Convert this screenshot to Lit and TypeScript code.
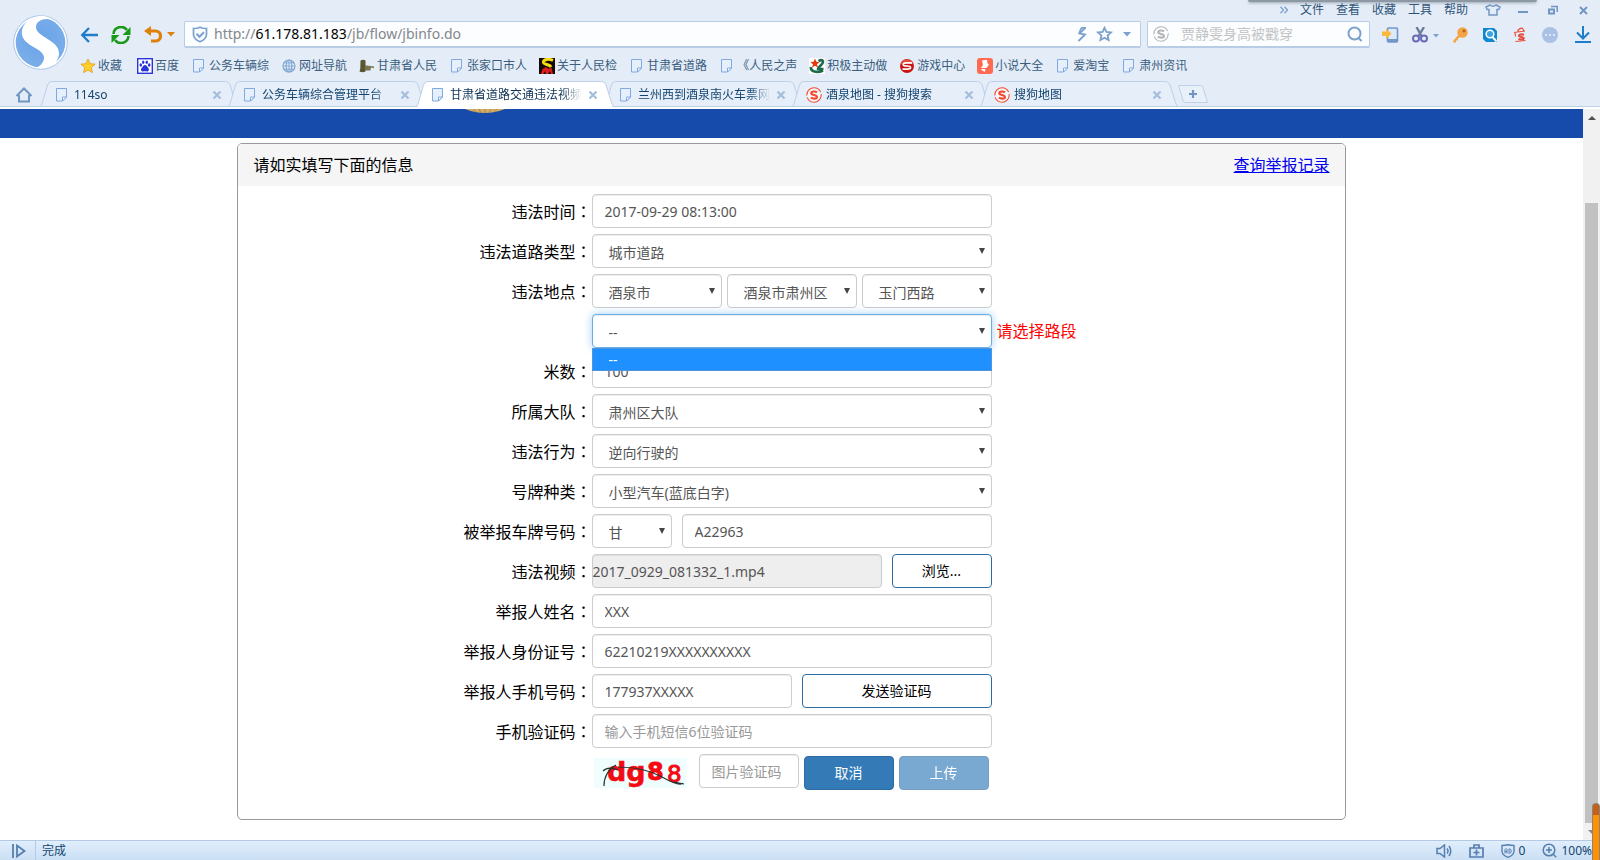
import { LitElement, html, svg, css, nothing, TemplateResult } from "lit";
import { customElement, state } from "lit/decorators.js";
import { classMap } from "lit/directives/class-map.js";

type Icon = TemplateResult;

const S_CURVE = "M11 5.3C9.6 4.2 5.3 4 5.3 6.3c0 2.2 5.6 1.2 5.6 3.6 0 2.2-4.2 2.1-6 .8";

const pageIcon: Icon = html`<svg width="16" height="16" viewBox="0 0 16 16" aria-hidden="true">
  <path d="M2.500 1.500h10v8.500l-4 4h-6z" fill="#e6f0fc" stroke="#7fa9e0" />
  <path d="M12.500 10h-4v4z" fill="#fff" stroke="#7fa9e0" />
</svg>`;
const sogouIcon = (color: string): Icon => html`<svg width="16" height="16" viewBox="0 0 16 16" aria-hidden="true">
  <circle cx="8" cy="8" r="7.200" fill="#fff" fill-opacity=".5" stroke=${color} stroke-width="1.100" stroke-dasharray="20 2" />
  <path d=${S_CURVE} fill="none" stroke=${color} stroke-width="2.200" />
</svg>`;
const starIcon: Icon = html`<svg width="16" height="16" viewBox="0 0 16 16" aria-hidden="true">
  <path d="M8 1l2.100 4.700 5 .5-3.800 3.400 1.100 5L8 12l-4.400 2.600 1.100-5L.9 6.200l5-.5z" fill="#ffcf2e" stroke="#e3a21a" stroke-width=".9" />
</svg>`;
const pawIcon: Icon = html`<svg width="16" height="16" viewBox="0 0 16 16" aria-hidden="true">
  <rect x=".7" y=".7" width="14.600" height="14.600" fill="#fff" stroke="#2a35d8" stroke-width="1.400" />
  <g fill="#2a35d8"><ellipse cx="3.800" cy="7" rx="1.300" ry="1.700" /><ellipse cx="6.200" cy="4.200" rx="1.200" ry="1.800" />
  <ellipse cx="9.800" cy="4.200" rx="1.200" ry="1.800" /><ellipse cx="12.200" cy="7" rx="1.300" ry="1.700" />
  <path d="M8 7c1.500 0 2 1.500 3 2.400 1.300 1.200 1.400 4-1 4-.8 0-1.200-.2-2-.2s-1.200.2-2 .2c-2.400 0-2.300-2.800-1-4C6 8.500 6.500 7 8 7z" /></g>
</svg>`;
const globeIcon: Icon = html`<svg width="16" height="16" viewBox="0 0 16 16" fill="none" stroke="#83a8d3" stroke-width="1.200" aria-hidden="true">
  <circle cx="8" cy="8" r="6" /><ellipse cx="8" cy="8" rx="2.800" ry="6" /><path d="M8 2v12M2 8h12M3 4.800h10M3 11.200h10" stroke-width="1" />
</svg>`;
const gavelIcon: Icon = html`<svg width="16" height="16" viewBox="0 0 16 16" aria-hidden="true">
  <path d="M1.500 2.500q3-1.500 5 0v11q-3 1.500-6 0l.8-3z" fill="#5a5532" /><path d="M6 7.200l9 1.300v1.700l-3-.6-.6 3H6z" fill="#7b7550" />
</svg>`;
const courtIcon: Icon = html`<svg width="16" height="16" viewBox="0 0 16 16" aria-hidden="true">
  <rect width="16" height="16" fill="#140a05" /><path d="M14 2.500C10 .3 4 1.500 4.500 4.500 5 7 10.500 6 12 9" fill="none" stroke="#f7dc12" stroke-width="3" />
  <path d="M2 16l1.500-5 3.500-2 2.500 2 3-1.500 1.500 6.500h-2l-1-3-2 3H7l-1-3-1.500 3z" fill="#dc1d1d" />
</svg>`;
const starRingIcon: Icon = html`<svg width="16" height="16" viewBox="0 0 16 16" aria-hidden="true">
  <rect width="16" height="16" fill="#fff" /><path d="M9.500 3q4-2 4.500.5c.5 3-5 5-5 7.500h5.500M2 9c-1 4.500 6 6.500 12 3.500" fill="none" stroke="#1b6b4b" stroke-width="2.600" />
  <path d="M6 .5l1.300 3.200L10.500 4 8 6.300 9 9.500 6 7.700 3 9.500 4 6.300 1.300 4l3.400-.3z" fill="#e5380d" />
</svg>`;
const gameIcon: Icon = html`<svg width="16" height="16" viewBox="0 0 16 16" aria-hidden="true">
  <circle cx="8" cy="8" r="7" fill="#c8150f" /><path d="M1.800 6a6.500 6.500 0 0 1 12.400 0z" fill="#ef6a58" fill-opacity=".7" />
  <path d="M13 4.800H7.200Q4 5 4.200 6.700 4.500 8 8 8q3.800 0 3.600 1.700-.3 1.500-3.200 1.500H3.500" fill="none" stroke="#fff" stroke-width="1.700" />
</svg>`;
const novelIcon: Icon = html`<svg width="16" height="16" viewBox="0 0 16 16" aria-hidden="true">
  <rect width="16" height="16" rx="3" fill="#ff6a50" /><path d="M5 2.500l5-.7.5 3.500L12 6.500 9.500 10H4l2-3z" fill="#fff" /><path d="M3.800 11h4.500L8 14l-2-1z" fill="#fff" />
</svg>`;

const caret = svg`<path d="M0 0h8L4 4.500z" fill="#7ba1cc" />`;

interface Bookmark { label: string; icon: Icon }
interface Tab { title: string; icon: Icon; active?: boolean }

const BOOKMARKS: Bookmark[] = [
  { label: "百度", icon: pawIcon },
  { label: "公务车辆综", icon: pageIcon },
  { label: "网址导航", icon: globeIcon },
  { label: "甘肃省人民", icon: gavelIcon },
  { label: "张家口市人", icon: pageIcon },
  { label: "关于人民检", icon: courtIcon },
  { label: "甘肃省道路", icon: pageIcon },
  { label: "《人民之声", icon: pageIcon },
  { label: "积极主动做", icon: starRingIcon },
  { label: "游戏中心", icon: gameIcon },
  { label: "小说大全", icon: novelIcon },
  { label: "爱淘宝", icon: pageIcon },
  { label: "肃州资讯", icon: pageIcon },
];

const TABS: Tab[] = [
  { title: "114so", icon: pageIcon },
  { title: "公务车辆综合管理平台", icon: pageIcon },
  { title: "甘肃省道路交通违法视频举报", icon: pageIcon, active: true },
  { title: "兰州西到酒泉南火车票网上订", icon: pageIcon },
  { title: "酒泉地图 - 搜狗搜索", icon: sogouIcon("#f4492c") },
  { title: "搜狗地图", icon: sogouIcon("#f4492c") },
];

@customElement("app-root")
export class AppRoot extends LitElement {
  @state() private sectionOpen = true;

  static styles = css`
    :host {
      display: grid;
      grid-template-rows: auto 1fr auto;
      min-height: 100vh;
      position: relative;
      background: #fff;
      color: #000;
      font-family: "Noto Sans", "Noto Sans CJK SC", sans-serif;
      font-size: 12px;
      line-height: 16px;
    }
    *, *::before, *::after { box-sizing: border-box; }
    svg { display: block; flex: none; }
    button, input, select { font: inherit; color: inherit; margin: 0; }
    button { background: none; border: 0; padding: 0; cursor: pointer; }
    a { color: inherit; }

    /* browser frame */
    .frame { background: #e4edf7; display: grid; grid-template-columns: 80px 1fr; }
    .logo { grid-row: 1 / 4; padding: 15px 0 0 13px; }
    .menu { display: flex; align-items: center; justify-content: flex-end; height: 20px; padding-right: 2px; color: #2c5378; }
    .menu-items { display: flex; align-items: center; gap: 12px; margin-right: 10px; }
    .icon-button { display: flex; align-items: center; justify-content: center; width: 30px; height: 20px; }
    .edge-shadow { position: absolute; top: 0; right: 63px; width: 289px; height: 2px; background: #8d98a5; border-radius: 0 0 3px 3px; box-shadow: 0 1px 3px #8d98a5; }
    .address-row { display: flex; align-items: center; height: 29px; }
    .nav { display: flex; align-items: center; gap: 12px; width: 104px; flex: none; }
    .nav .undo { display: flex; align-items: center; gap: 5px; }
    .address, .search { display: flex; align-items: center; height: 27px; background: #fbfdfe; border: 1px solid #b9cce6; border-bottom-width: 2px; border-radius: 2px; }
    .address { flex: 1; padding: 0 8px 0 7px; gap: 6px; font-size: 14px; line-height: 20px; }
    .url { display: grid; flex: 1; color: #84878b; white-space: pre; }
    .url > * { grid-area: 1 / 1; }
    .url input { border: 0; padding: 0; background: none; color: transparent; caret-color: #000; outline: none; min-width: 0; }
    .url b { font-weight: 400; color: #000; }
    .address-tools { display: flex; align-items: center; gap: 9px; }
    .search { width: 223px; margin-left: 6px; padding: 0 6px 0 5px; gap: 12px; font-size: 14px; line-height: 20px; }
    .search input { flex: 1; min-width: 0; border: 0; padding: 0; background: none; outline: none; }
    .search input::placeholder { color: #c2c4c6; opacity: 1; }
    .tools { display: flex; align-items: center; padding-left: 5px; }
    .tools .wide { width: 40px; }
    .tools .download { width: 35px; }
    .bookmarks { display: flex; align-items: center; gap: 12px; height: 32px; padding-top: 1px; color: #3a5d80; }
    .bookmarks a { display: flex; align-items: center; gap: 2px; text-decoration: none; white-space: nowrap; }
    .bookmarks .favourites { padding-right: 3px; }

    .tabs { grid-column: 1 / 3; display: flex; height: 28px; background: linear-gradient(#e4edf7 25px, #bdd0e8 25px, #bdd0e8 26px, #fff 26px); }
    .home { width: 40px; padding-left: 8px; height: 26px; }
    .tab { position: relative; height: 28px; flex: 0 0 188px; display: grid; grid-template-columns: 188px; }
    .tab > * { grid-area: 1 / 1; }
    .tab.active { z-index: 1; }
    .tab-body { display: flex; align-items: center; height: 28px; padding: 0 6px 0 14px; gap: 4px; z-index: 1; }
    .tab-title { flex: 1; min-width: 0; overflow: hidden; text-align: left; white-space: nowrap; color: #14446f; -webkit-mask-image: linear-gradient(90deg, #000 112px, transparent 132px); mask-image: linear-gradient(90deg, #000 112px, transparent 132px); }
    .tab-title.dark { color: #0d3253; }
    .new-tab { margin-left: 9px; height: 26px; }

    /* page */
    .view { display: grid; grid-template-columns: 1fr 17px; }
    .banner { background: #174bab; height: 29px; padding-left: 29%; }
    .panel { width: 70%; margin: 5px auto 20px; border: 1px solid #999; border-radius: 5px; overflow: hidden; font-size: 16px; line-height: 24px; }
    .panel-head { display: flex; align-items: center; justify-content: space-between; background: #f5f5f5; height: 42px; padding: 0 15px; }
    .panel-head h1 { margin: 0; font-size: 16px; font-weight: 400; }
    .panel-head a { color: #00e; }
    form { display: grid; gap: 6px; padding: 8px 0 29px; }
    .row { display: grid; grid-template-columns: 1fr 400px 1fr; align-items: center; }
    .row > label { text-align: right; }
    .colon { font-family: "Noto Sans CJK TC", sans-serif; }
    .controls { display: flex; gap: 10px; position: relative; grid-column: 2; }
    .controls.tight { gap: 5px; }
    .error { color: #f00; padding-left: 5px; }
    .control { height: 34px; width: 100%; padding: 6px 12px; border: 1px solid #ccc; border-radius: 4px; background: #fff; color: #555; font-size: 14px; line-height: 20px; box-shadow: inset 0 1px 1px rgba(0, 0, 0, .075); outline: none; }
    .control::placeholder { color: #999; opacity: 1; }
    .pick { display: grid; flex: 1; min-width: 0; }
    .pick > * { grid-area: 1 / 1; }
    .pick svg { justify-self: end; margin: 13px 7px 0 0; pointer-events: none; z-index: 1; }
    .pick select { appearance: none; padding: 8px 18px 4px 16px; }
    .pick.focused select { border-color: #66afe9; box-shadow: inset 0 1px 1px rgba(0, 0, 0, .075), 0 0 8px rgba(102, 175, 233, .6); }
    .province { flex: 0 0 80px; }
    .file { background: #eee; padding-left: 0; }
    .phone { flex: 0 0 200px; }
    .options { position: absolute; top: 34px; left: 0; right: 0; z-index: 2; margin: 0; padding: 0; list-style: none; border: 1px solid #4f94dc; background: #1e90ff; color: #fff; font-size: 14px; line-height: 21px; }
    .options li { padding-left: 16px; }
    .action { height: 34px; border: 1px solid #2e6da4; border-radius: 4px; background: #fff; font-size: 14px; line-height: 20px; flex: 1; }
    .action.browse { flex: 0 0 100px; }
    .action.solid { flex: 0 0 90px; background: #337ab7; color: #fff; margin-top: 2px; }
    .action[disabled] { opacity: .65; }
    .captcha { margin: 4px 0 0 2px; overflow: visible; }
    .code { flex: 0 0 100px; width: 100px; }

    .scrollbar { background: #f1f1f1; display: grid; grid-template-rows: 17px 1fr 17px; justify-items: center; align-items: center; }
    .scrollbar .track { align-self: stretch; width: 13px; padding-top: 77px; display: grid; }
    .scrollbar .thumb { background: #c1c1c1; }
    .meter { position: absolute; right: 0; bottom: 0; z-index: 3; width: 8px; height: 57px; border: 1px solid #8d8478; border-bottom: 0; border-radius: 4px 4px 0 0; background: linear-gradient(#c4601a 11px, #ff9000 11px); }

    .status { display: flex; align-items: center; height: 20px; padding: 0 8px 0 11px; border-top: 1px solid #b3c9e4; background: linear-gradient(#e0eefc, #cbdff4); color: #14446f; }
    .status-text { margin-left: 9px; padding-left: 6px; border-left: 1px solid #b3c9e4; line-height: 19px; flex: 1; }
    .status-tools { display: flex; align-items: center; gap: 17px; }
    .status-tools span { display: flex; align-items: center; gap: 4px; }
  `;

  private pick(id: string, value: string, extra = "", label = "", focused = false) {
    return html`<span class=${classMap({ pick: true, focused, [extra || "plain"]: true })}>
      <select class="control" id=${id} aria-label=${label || nothing}><option>${value}</option></select>
      <svg width="6" height="7" viewBox="0 0 6 7" aria-hidden="true"><path d="M0 1h6L3 7z" fill="#444" /></svg>
    </span>`;
  }

  private row(id: string, label: string, controls: unknown, tight = false, after: unknown = nothing) {
    return html`<div class="row">
      ${label ? html`<label for=${id}>${label}<span class="colon">：</span></label>` : nothing}
      <div class=${classMap({ controls: true, tight })}>${controls}</div>
      ${after}
    </div>`;
  }

  private input(id: string, value: string, extra = "") {
    return html`<input class="control ${extra}" id=${id} type="text" .value=${value} />`;
  }

  private renderMenu() {
    return html`<div class="menu">
      <div class="menu-items">
        <svg width="8" height="8" viewBox="0 0 8 8" fill="none" stroke="#7ba1cc" stroke-width="1.300" aria-hidden="true"><path d="M.5 .8L3.500 4 .5 7.200M4.500 .8L7.500 4 4.500 7.200" /></svg>
        ${["文件", "查看", "收藏", "工具", "帮助"].map((t) => html`<button type="button">${t}</button>`)}
      </div>
      <button class="icon-button" type="button" aria-label="皮肤"><svg width="16" height="12" viewBox="0 0 16 12" fill="none" stroke="#7196c2" stroke-width="1.500"><path d="M5 1L1 3l1.200 2.500H4V11h8V5.500h1.800L15 3l-4-2q-3 2.500-6 0z" /></svg></button>
      <button class="icon-button" type="button" aria-label="最小化"><svg width="10" height="10" viewBox="0 0 10 10"><path d="M0 6h10v2H0z" fill="#7196c2" /></svg></button>
      <button class="icon-button" type="button" aria-label="还原"><svg width="10" height="10" viewBox="0 0 10 10" fill="none" stroke="#7196c2"><path d="M1 4.500h5v4H1z" stroke-width="2" /><path d="M3 1.500h6.300V7" stroke-width="1.600" /></svg></button>
      <button class="icon-button" type="button" aria-label="关闭"><svg width="9" height="9" viewBox="0 0 9 9" stroke="#7196c2" stroke-width="2"><path d="M1 1l7 7M8 1L1 8" /></svg></button>
    </div>`;
  }

  private renderAddress() {
    return html`<div class="address-row">
      <div class="nav">
        <button type="button" aria-label="后退"><svg width="18" height="16" viewBox="0 0 18 16" fill="none" stroke="#1f7cc8" stroke-width="2.300"><path d="M9 1L2.200 8 9 15M2 8h16" /></svg></button>
        <button type="button" aria-label="刷新"><svg width="22" height="18" viewBox="0 0 22 18" fill="none" stroke="#189a18" stroke-width="2.600"><path d="M3.500 8A7.500 7.500 0 0 1 17 4M18.500 10A7.500 7.500 0 0 1 5 14" /><path d="M20.500 1v8h-8zM1.500 17V9h8z" fill="#189a18" stroke="none" /></svg></button>
        <button class="undo" type="button" aria-label="撤销"><svg width="18" height="18" viewBox="0 0 18 18"><path d="M5 5h6.500a5 5 0 0 1 0 10H7" fill="none" stroke="#dd8108" stroke-width="3.200" /><path d="M7 0v10L0 5z" fill="#dd8108" /></svg>
        <svg width="8" height="5" viewBox="0 0 8 5"><path d="M0 0h8L4 4.500z" fill="#dd8108" /></svg></button>
      </div>
      <div class="address">
        <svg width="16" height="17" viewBox="0 0 16 17" fill="none" stroke="#7ba1cc" stroke-width="1.700" aria-hidden="true"><path d="M8 1.200Q11 2.700 14.500 2.500V8.500Q14.300 13 8 15.800 1.700 13 1.500 8.500V2.500Q5 2.700 8 1.200z" /><path d="M4.500 7.800l3 3 4.500-4.600" stroke-width="2" /></svg>
        <div class="url">
          <span aria-hidden="true">http://<b>61.178.81.183</b>/jb/flow/jbinfo.do</span>
          <input type="text" aria-label="地址" .value=${"http://61.178.81.183/jb/flow/jbinfo.do"} />
        </div>
        <div class="address-tools">
          <button type="button" aria-label="极速模式"><svg width="10" height="15" viewBox="0 0 10 15" fill="none" stroke="#7ba1cc" stroke-width="1.800"><path d="M8.500 .5L2.500 6.500 8 7.500 1.500 14" /><path d="M4 .9h5M2.300 6l2-5" /></svg></button>
          <button type="button" aria-label="收藏此页"><svg width="17" height="16" viewBox="0 0 17 16"><path d="M8.500 1.800l1.900 4.100 4.600.5-3.400 3.100 1 4.500-4.100-2.300L4.400 14l1-4.500L2 6.400l4.600-.5z" fill="none" stroke="#7ba1cc" stroke-width="1.800" /></svg></button>
          <button type="button" aria-label="历史地址"><svg width="10" height="5" viewBox="-1 0 10 5">${caret}</svg></button>
        </div>
      </div>
      <div class="search">
        ${sogouIcon("#b5b5b5")}
        <input type="text" aria-label="搜索" placeholder="贾静雯身高被戳穿" />
        <button type="button" aria-label="搜索"><svg width="16" height="16" viewBox="0 0 16 16" fill="none" stroke="#7ba1cc" stroke-width="2"><circle cx="7.500" cy="7.500" r="6" /><path d="M11.500 12l3 3" /></svg></button>
      </div>
      <div class="tools">
        <button class="icon-button" type="button" aria-label="手机"><svg width="17" height="16" viewBox="0 0 17 16"><rect x="5.500" y="1" width="10" height="14" rx="1" fill="#dce9f7" stroke="#7196cc" stroke-width="1.600" /><path d="M6 12h9v3H6z" fill="#7196cc" /><path d="M0 4.500h4V1.500l5.500 5.300L4 12V9H0z" fill="#f9b93c" /></svg></button>
        <button class="icon-button wide" type="button" aria-label="截图"><svg width="27" height="16" viewBox="0 0 27 16"><path d="M4.500 0L10 10M12 0L6 10" stroke="#6d7c9c" stroke-width="2.400" /><g fill="none" stroke="#6a6bb8" stroke-width="2"><circle cx="4" cy="11.500" r="3" /><circle cx="12" cy="11.500" r="3" /></g><path d="M21 7h6l-3 3.500z" fill="#7ba1cc" /></svg></button>
        <button class="icon-button" type="button" aria-label="密码"><svg width="16" height="16" viewBox="0 0 16 16"><circle cx="10.500" cy="5.500" r="5.200" fill="#f4a447" /><path d="M7 7L1.500 13.500 1 15.500h3v-2h2v-2l3-2" fill="#f4a447" /><circle cx="12" cy="4" r="1.400" fill="#a5641a" /></svg></button>
        <button class="icon-button" type="button" aria-label="查找"><svg width="16" height="16" viewBox="0 0 16 16"><path d="M1 1h11l3 3v11H4l-3-3z" fill="#1088cf" /><circle cx="8" cy="7" r="3.800" fill="#3aa5e0" stroke="#fff" stroke-width="1.500" /><path d="M10.500 10l4 4.500" stroke="#fff" stroke-width="2" /></svg></button>
        <button class="icon-button" type="button" aria-label="购物"><svg width="14" height="16" viewBox="0 0 14 16" fill="none" stroke="#ea4b3a"><path d="M1 5.500l11-1.500M2 5.500l.5 4M2.500 14.500l10-1M4.500 4.500Q6 .8 9.500 1.200L11 4" stroke-width="1.100" /><path d="M11 7.700C9 7 5.700 7.400 6 9c.3 1.300 5 .6 4.800 2.300-.2 1.500-3.800 1.300-5.300.6" stroke-width="2.100" /></svg></button>
        <button class="icon-button" type="button" aria-label="更多"><svg width="16" height="16" viewBox="0 0 16 16"><circle cx="8" cy="8" r="8" fill="#a9c1e4" /><g fill="#e9f1fa"><circle cx="4" cy="8" r="1.100" /><circle cx="8" cy="8" r="1.100" /><circle cx="12" cy="8" r="1.100" /></g></svg></button>
        <button class="icon-button download" type="button" aria-label="下载"><svg width="16" height="17" viewBox="0 0 16 17" fill="none" stroke="#1f7cc8" stroke-width="2"><path d="M8 0v12M2 6.500l6 6 6-6M0 16h16" /></svg></button>
      </div>
    </div>`;
  }

  private renderTab(tab: Tab) {
    const active = !!tab.active;
    return html`<div class=${classMap({ tab: true, active })}>
      <svg width="199" height="28" viewBox="0 0 199 28" aria-hidden="true">
        <path d="M0 25.500Q1.500 25 2 23L7.500 4Q8.500 .5 12 .5H185.500Q189 .5 190 4L196 23Q196.500 25.500 198.500 25.500" fill=${active ? "#fff" : "#e6eff9"} stroke="#bdd0e8" />
        ${active ? svg`<path d="M2 24h194v4H2z" fill="#fff" />` : svg`<path d="M0 25.500h199" stroke="#bdd0e8" />`}
      </svg>
      <div class="tab-body">
        ${tab.icon}
        <button type="button" class=${classMap({ "tab-title": true, dark: active })}>${tab.title}</button>
        <button type="button" aria-label="关闭标签"><svg width="10" height="10" viewBox="0 0 10 10" stroke="#a3bedd" stroke-width="2.200"><path d="M1.500 1.500l7 7M8.500 1.500l-7 7" /></svg></button>
      </div>
    </div>`;
  }

  private renderForm() {
    return html`<form @submit=${(e: Event) => e.preventDefault()}>
      ${this.row("time", "违法时间", this.input("time", "2017-09-29 08:13:00"))}
      ${this.row("road-type", "违法道路类型", this.pick("road-type", "城市道路"))}
      ${this.row("city", "违法地点", [
        this.pick("city", "酒泉市"),
        this.pick("district", "酒泉市肃州区", "", "区县"),
        this.pick("road", "玉门西路", "", "道路"),
      ], true)}
      ${this.row("section", "", [
        this.pick("section", "--", "", "路段", true),
        this.sectionOpen
          ? html`<ul class="options" role="listbox" aria-label="路段"><li role="option" aria-selected="true" @click=${() => (this.sectionOpen = false)}>--</li></ul>`
          : nothing,
      ], false, html`<span class="error">请选择路段</span>`)}
      ${this.row("metres", "米数", this.input("metres", "100"))}
      ${this.row("brigade", "所属大队", this.pick("brigade", "肃州区大队"))}
      ${this.row("offence", "违法行为", this.pick("offence", "逆向行驶的"))}
      ${this.row("plate-type", "号牌种类", this.pick("plate-type", "小型汽车(蓝底白字)"))}
      ${this.row("plate", "被举报车牌号码", [this.pick("province", "甘", "province", "省份"), this.input("plate", "A22963")])}
      ${this.row("video", "违法视频", html`
        <input class="control file" id="video" type="text" readonly .value=${"2017_0929_081332_1.mp4"} />
        <button class="action browse" type="button">浏览...</button>`)}
      ${this.row("name", "举报人姓名", this.input("name", "XXX"))}
      ${this.row("id-number", "举报人身份证号", this.input("id-number", "62210219XXXXXXXXXX"))}
      ${this.row("phone", "举报人手机号码", html`${this.input("phone", "177937XXXXX", "phone")}<button class="action" type="button">发送验证码</button>`)}
      ${this.row("sms", "手机验证码", html`<input class="control" id="sms" type="text" placeholder="输入手机短信6位验证码" />`)}
      ${this.row("captcha", "", html`
        <svg class="captcha" width="100" height="30" viewBox="0 0 100 30" role="img" aria-label="图片验证码">
          <rect width="93" height="30" fill="#effdfd" />
          <g fill="#f50a12" stroke="#f50a12" font-family="DejaVu Sans">
            <text x="13" y="23" font-size="27" font-weight="700" stroke-width=".5">dg</text>
            <text x="53" y="22" font-size="24" font-weight="700" stroke-width=".8">8</text>
            <text x="73" y="24" font-size="23" stroke-width="1">8</text>
          </g>
          <path d="M9 13Q14 8 24 12M22 7Q10 14 10 28M24 9Q50 9 68 19T89 25M80 24l10 2" fill="none" stroke="#253434" stroke-width="1.200" />
        </svg>
        <input class="control code" id="captcha" type="text" aria-label="图片验证码" placeholder="图片验证码" />
        <button class="action solid" type="button">取消</button>
        <button class="action solid" type="submit" disabled>上传</button>`, true)}
    </form>`;
  }

  render() {
    return html`
      <header class="frame">
        <div class="logo">
          <svg width="55" height="55" viewBox="0 0 55 55" role="img" aria-label="浏览器">
            <defs><radialGradient id="ball" cy=".45"><stop offset="0" stop-color="#6aa2e8" /><stop offset="1" stop-color="#78ade9" /></radialGradient></defs>
            <circle cx="27.500" cy="27.500" r="26.800" fill="#fff" stroke="#a8c4e8" />
            <circle cx="27.500" cy="27.500" r="24.800" fill="url(#ball)" />
            <path d="M31 1C17 1 8 9 9 19c1 12 21 14 22 23 .5 6-5 10-9 11 20 2 24-9 24-15C46 25 23 22 23 12c0-5 5-8 11-8q6 0 9 3Q37 2 31 1z" fill="#fff" />
          </svg>
        </div>
        ${this.renderMenu()}
        ${this.renderAddress()}
        <nav class="bookmarks">
          <a class="favourites" href="#">${starIcon}收藏</a>
          ${BOOKMARKS.map((b) => html`<a href="#">${b.icon}${b.label}</a>`)}
        </nav>
        <div class="tabs">
          <button class="home" type="button" aria-label="主页"><svg width="32" height="26" viewBox="0 0 32 26" fill="none" stroke="#7196c2" stroke-width="2"><path d="M8.500 15L16 7.500l7.500 7.500M11 14v6.500h10V14" /></svg></button>
          ${TABS.map((t) => this.renderTab(t))}
          <button class="new-tab" type="button" aria-label="新标签"><svg width="32" height="26" viewBox="0 0 32 26"><path d="M1.500 4.500H23.500Q25.500 4.500 26 6.500L30.500 21.500H8.500Q6.500 21.500 6 19.500z" fill="#e8f1fa" stroke="#bdd0e8" /><path d="M16 9v8M12 13h8" stroke="#7196c2" stroke-width="2.200" /></svg></button>
        </div>
      </header>
      <div class="edge-shadow"></div>
      <div class="view">
        <main>
          <div class="banner"><svg width="52" height="5" viewBox="0 0 52 5" aria-hidden="true"><path d="M6 0h40Q36 4 26 4T6 0z" fill="#d3ac66" /><path d="M20 0l2 4M26 0v4M32 0l-2 4M14 0l3 3M38 0l-3 3" stroke="#a37a35" stroke-width=".7" /></svg></div>
          <section class="panel">
            <div class="panel-head"><h1>请如实填写下面的信息</h1><a href="#">查询举报记录</a></div>
            ${this.renderForm()}
          </section>
        </main>
        <div class="scrollbar" aria-hidden="true">
          <svg width="8" height="4" viewBox="0 0 8 4"><path d="M0 4h8L4 0z" fill="#505050" /></svg>
          <div class="track"><div class="thumb"></div></div>
          <svg width="8" height="4" viewBox="0 0 8 4"><path d="M0 0h8L4 4z" fill="#8a8a8a" /></svg>
        </div>
      </div>
      <footer class="status">
        <svg width="15" height="14" viewBox="0 0 15 14" fill="none" stroke="#567fae" stroke-width="1.800" aria-hidden="true"><path d="M2 0v14M6 1.500v11l7.500-5.500z" /></svg>
        <span class="status-text">完成</span>
        <div class="status-tools">
          <svg width="16" height="14" viewBox="0 0 16 14" fill="none" stroke="#567fae" stroke-width="1.500" aria-hidden="true"><path d="M1 4.500h3L8.500 1v12L4 9.500H1zM11 4.500q2 2.500 0 5M13 2q3.500 5 0 10" /></svg>
          <svg width="15" height="14" viewBox="0 0 15 14" fill="none" stroke="#567fae" stroke-width="1.700" aria-hidden="true"><path d="M1 4h13v9H1zM5 4V1h5v3M7.500 5.500v6M4.500 8.500h6" /></svg>
          <span><svg width="14" height="14" viewBox="0 0 14 14" fill="none" stroke="#567fae" aria-hidden="true"><path d="M7 .8Q10 1.500 13 1.500V7.500Q12.500 11.500 7 13.300 1.500 11.500 1 7.500V1.500Q4 1.500 7 .8z" stroke-width="1.400" /><path d="M4 9.500V5.500L5 4.500 6 5.500v4M4 7.500h2M8 4.800v4.500q2.300 0 2.300-2.200T8 4.800" /></svg>0</span>
          <span><svg width="15" height="15" viewBox="0 0 15 15" fill="none" stroke="#567fae" stroke-width="1.500" aria-hidden="true"><circle cx="7" cy="7" r="5.800" /><path d="M7 4v6M4 7h6M11 11l3.200 3.200" /></svg>100%</span>
        </div>
      </footer>
      <div class="meter"></div>
    `;
  }
}
